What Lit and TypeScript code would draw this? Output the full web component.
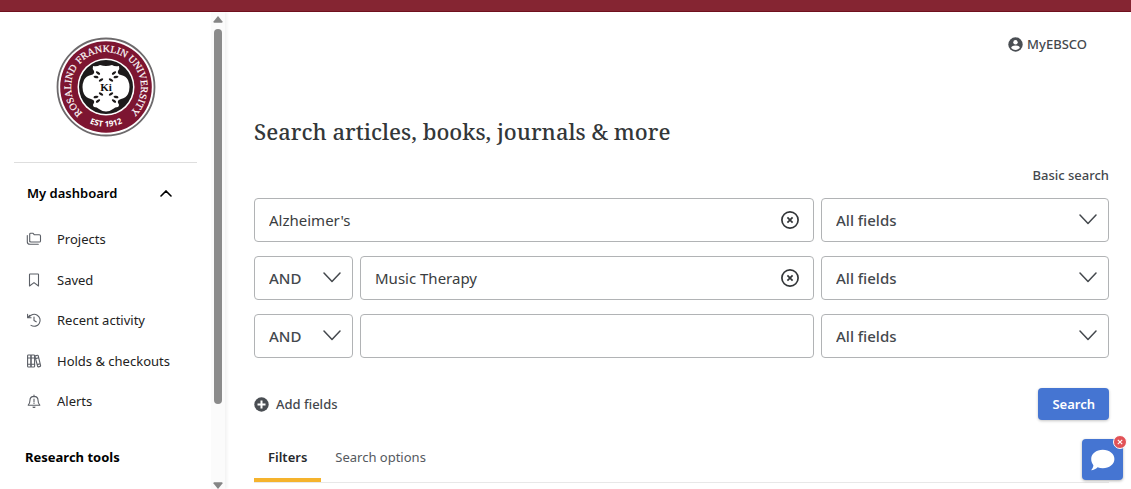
import { LitElement, html, css, svg, nothing } from "lit";
import { customElement, property } from "lit/decorators.js";

const stroke = (body: unknown, size = 16) => html`<svg
  width=${size} height=${size} viewBox="0 0 16 16" fill="none"
  stroke="currentColor" stroke-width="1.1" stroke-linecap="round" stroke-linejoin="round"
  aria-hidden="true">${body}</svg>`;

const icons = {
  projects: svg`<path d="M3.7 10.6V3.2q0-.9.9-.9h2.5l1.3 1.5h4.9q1.2 0 1.2 1.1v5q0 1.1-1.1 1.1H5q-1.3 0-1.3-1.3"/><path d="M1.3 4.6v6.1q0 2.6 2.6 2.6h8.4"/>`,
  saved: svg`<path d="M3.5 2.6q0-.6.6-.6h7.8q.6 0 .6.6V14L8 10.6 3.5 14z"/>`,
  recent: svg`<path d="M3 5.2A6 6 0 1 1 5 13.4"/><path d="M1.6 2.4v3.4h3.5M1.8 5.6l2-2.2M8 5v3.6l2.2 1.2"/>`,
  holds: svg`<rect x="1.6" y="2" width="3.4" height="12" rx=".8"/><rect x="5" y="2" width="3.6" height="12" rx=".8"/><path d="M9.2 2.9l2.3-.7q.5-.1.7.4l2.4 10q.1.6-.4.8l-1.8.5q-.5.1-.7-.4L9 3.6q-.1-.5.2-.7M1.6 5H8.6M1.6 11.2h7M9.6 5.6l3-.8M11.2 11.6l2.9-.8"/>`,
  alerts: svg`<path d="M2.2 12.2h11.6q-1.7-1.6-1.7-4.4Q12.1 3.5 8 3.4 3.9 3.5 3.9 7.8q0 2.8-1.7 4.4zM8 3.4V2M8 6v3M8 10.3v.2M7 14q1 .8 2 0"/>`,
};

const chevron = html`<svg class="chevron" width="18" height="11" viewBox="0 0 18 11" fill="none" stroke="currentColor" stroke-width="1.5" stroke-linecap="round" stroke-linejoin="round" aria-hidden="true"><path d="M1 1l8 8.5L17 1"/></svg>`;

@customElement("university-seal")
class UniversitySeal extends LitElement {
  static styles = css`
    :host { display: block; }
    .seal { display: block; }
    .ring { font-family: "Liberation Serif", serif; font-size: 10px; fill: #fff; stroke: #fff; stroke-width: 0.2px; }
    .est { font-family: "Noto Sans", sans-serif; font-size: 8px; font-weight: 700; fill: #fff; }
    .mono { font-family: "Liberation Serif", serif; font-size: 11px; font-weight: 700; fill: #111; }
  `;
  render() {
    const marks = [[8, -14, -35], [10, -10, -10], [5, -7, 30], [5, 7, -30], [10, 10, 10], [8, 14, 35]];
    return html`<svg class="seal" width="100" height="100" viewBox="-50 -50 100 100" role="img" aria-label="Rosalind Franklin University, est 1912">
      <defs>
        <path id="over" d="M-23.5 26A35 35 0 1 1 23.5 26"/>
        <path id="under" d="M-30 26A39.7 39.7 0 0 0 30 26"/>
      </defs>
      <circle r="48.5" fill="#fff" stroke="#6d6a6c" stroke-width="1.8"/>
      <circle r="45.8" fill="#7d1531"/>
      <circle r="28.5" fill="#fff"/>
      <circle r="27" fill="#1d1a1b"/>
      <path fill="#fff" d="M-13 -21Q-9 -20-6 -22Q0 -20 6 -22Q9 -20 13 -21Q14 -18 12 -16Q11 -13 15 -12Q20 -11 22 -7Q25 0 22 7Q20 11 15 12Q11 13 12 16Q14 18 12 20Q9 20 7 22Q0 27-7 22Q-9 20-12 20Q-14 18-12 16Q-11 13-15 12Q-20 11-22 7Q-25 0-22 -7Q-20 -11-15 -12Q-11 -13-12 -16Q-14 -18-13 -21Z"/>
      <g fill="#1d1a1b">
        ${[-1, 1].map((side) => svg`<g transform="scale(${side} 1)">
          ${marks.map(([x, y, a]) => svg`<ellipse cx=${x} cy=${y} rx="2.5" ry="1.2" transform="rotate(${a} ${x} ${y})"/>`)}
        </g>`)}
      </g>
      <text class="mono" x="0" y="4" text-anchor="middle">Ki</text>
      <text class="ring"><textPath href="#over" startOffset="0">ROSALIND</textPath></text>
      <text class="ring"><textPath href="#over" startOffset="54">FRANKLIN</textPath></text>
      <text class="ring"><textPath href="#over" startOffset="107">UNIVERSITY</textPath></text>
      <text class="est"><textPath href="#under" startOffset="50%" text-anchor="middle">EST 1912</textPath></text>
    </svg>`;
  }
}

@customElement("dashboard-nav")
class DashboardNav extends LitElement {
  static styles = css`
    :host { display: flex; overflow: hidden; background: #fff; box-shadow: 2px 0 3px #f2f2f2; }
    .content { flex: 1; min-width: 0; padding: 25px 14px 0; }
    .logo { display: flex; justify-content: center; padding-bottom: 25px; border-bottom: 1px solid #dedede; }
    .toggle { display: flex; align-items: center; justify-content: space-between; width: 100%;
      margin-top: 19px; padding: 0 25px 0 13px; border: 0; background: none; color: #000;
      font: 600 13px/22px "Noto Sans", sans-serif; }
    .links { display: flex; flex-direction: column; justify-content: space-between; height: 202px;
      list-style: none; margin: 15px 0 0; padding: 0 0 0 12px; }
    .link { display: flex; align-items: center; gap: 15px; height: 40px; color: #222; text-decoration: none;
      font: 400 13px/20px "Noto Sans", sans-serif; }
    .link svg { color: #5b5f66; }
    .tools { margin: 25px 0 0; padding-left: 11px; color: #000; font: 700 13px/22px "Noto Sans", sans-serif; }
    .track { display: flex; flex-direction: column; align-items: center; gap: 6px; width: 14px;
      padding-top: 4px; background: #fbfbfb; }
    .thumb { width: 8px; flex: 1; border-radius: 4px; background: #8b8b8b; margin-bottom: 72px; }
    .arrow { width: 10px; height: 7px; fill: #858585; flex: none; }
  `;
  render() {
    const items: [keyof typeof icons, string][] = [
      ["projects", "Projects"], ["saved", "Saved"], ["recent", "Recent activity"],
      ["holds", "Holds & checkouts"], ["alerts", "Alerts"],
    ];
    return html`
      <nav class="content" aria-label="Dashboard">
        <div class="logo"><university-seal></university-seal></div>
        <button class="toggle" aria-expanded="true">My dashboard
          <svg width="12" height="7" viewBox="0 0 12 7" fill="none" stroke="currentColor" stroke-width="1.6" stroke-linecap="round" aria-hidden="true"><path d="M1 6l5-5 5 5"/></svg>
        </button>
        <ul class="links">
          ${items.map(([icon, label]) => html`<li><a class="link" href="#">${stroke(icons[icon])}<span>${label}</span></a></li>`)}
        </ul>
        <h2 class="tools">Research tools</h2>
      </nav>
      <div class="track" aria-hidden="true">
        <svg class="arrow" viewBox="0 0 10 7"><path d="M5 0l4.5 5.5q.3 1.2-.8 1.2H1.3q-1.1 0-.8-1.2z"/></svg>
        <div class="thumb"></div>
        <svg class="arrow" viewBox="0 0 10 7"><path d="M5 7L.5 1.5Q.2.3 1.3.3h7.4q1.1 0 .8 1.2z"/></svg>
      </div>`;
  }
}

@customElement("search-row")
class SearchRow extends LitElement {
  @property() value = "";
  @property({ type: Boolean }) joined = false;
  @property({ type: Number }) index = 1;

  static styles = css`
    :host { display: grid; grid-template-columns: minmax(0, 35fr) minmax(0, 18fr); gap: 7px; }
    .query { display: flex; gap: 7px; min-width: 0; }
    .box { position: relative; display: flex; align-items: center; height: 44px; box-sizing: border-box;
      border: 1px solid #b1b3b5; border-radius: 4px; background: #fff; color: #44484d; }
    .operator { width: 99px; flex: none; }
    .term { flex: 1; min-width: 0; padding-right: 14px; }
    select, input { appearance: none; flex: 1; min-width: 0; width: 100%; height: 100%; margin: 0; padding: 0 14px;
      border: 0; border-radius: 4px; background: none; color: inherit; outline: none;
      font: 500 15px/22px "Noto Sans", sans-serif; }
    input { font-weight: 400; color: #3a3d40; }
    .chevron { position: absolute; right: 11px; top: 15px; pointer-events: none; }
    .clear { display: flex; padding: 0; border: 0; background: none; color: #333639; }
  `;
  render() {
    return html`
      <div class="query">
        ${this.joined ? html`<div class="box operator">
          <select aria-label="Operator ${this.index}"><option>AND</option><option>OR</option><option>NOT</option></select>${chevron}
        </div>` : nothing}
        <div class="box term">
          <input type="text" aria-label="Search term ${this.index}" .value=${this.value} />
          ${this.value ? html`<button class="clear" aria-label="Clear">
            <svg width="18" height="18" viewBox="0 0 18 18" fill="none" stroke="currentColor" stroke-width="1.7" aria-hidden="true"><circle cx="9" cy="9" r="8.1"/><path d="M6.4 6.4l5.2 5.2M11.6 6.4l-5.2 5.2"/></svg>
          </button>` : nothing}
        </div>
      </div>
      <div class="box">
        <select aria-label="Field ${this.index}"><option>All fields</option><option>Title</option><option>Author</option></select>${chevron}
      </div>`;
  }
}

@customElement("app-root")
class AppRoot extends LitElement {
  static styles = css`
    :host { display: flex; flex-direction: column; height: 100vh; overflow: hidden; background: #fff;
      font-family: "Noto Sans", sans-serif; color: #44484d; }
    .bar { flex: none; height: 12px; box-sizing: border-box; background: #852532; border-bottom: 1px solid #6f101e; }
    .body { flex: 1; min-height: 0; overflow: hidden; display: grid; grid-template-columns: 225px minmax(0, 1fr); }
    main { padding: 21px 22px 0 29px; }
    a { color: inherit; text-decoration: none; }
    .account { display: flex; align-items: center; justify-content: flex-end; gap: 4px; padding-right: 22px;
      font: 500 13px/22px "Noto Sans", sans-serif; }
    h1 { margin: 60px 0 0; color: #333739; font: 500 22px/32px "Noto Serif", "Droid Serif", "Liberation Serif", serif; }
    .basic { display: flex; justify-content: flex-end; margin: 17px 0 12px; font: 500 13px/22px "Noto Sans", sans-serif; }
    .rows { display: grid; gap: 14px; }
    .actions { display: flex; align-items: center; justify-content: space-between; margin-top: 30px; }
    .add { display: flex; align-items: center; gap: 7px; padding: 0; border: 0; background: none; color: inherit;
      font: 500 13px/22px "Noto Sans", sans-serif; }
    .search { height: 32px; padding: 0 14px; border: 0; border-radius: 4px; background: #4575d2; color: #fff;
      box-shadow: 0 1px 3px #c4c4c4; font: 600 13px/22px "Noto Sans", sans-serif; }
    .tabs { display: flex; margin-top: 20px; border-bottom: 1px solid #e8e8e8; }
    .tab { height: 42px; padding: 0 14px 8px; border: 0; background: none; color: #55595e;
      font: 400 13px/22px "Noto Sans", sans-serif; }
    .tab.active { border-bottom: 4px solid #f5b32d; padding-bottom: 4px; color: #26292c; font-weight: 600; }
    .chat { position: fixed; right: 8px; bottom: 9px; width: 41px; height: 41px; }
    .open { display: grid; place-items: center; width: 41px; height: 41px; padding: 0; border: 0; border-radius: 4px;
      background: #4575d2; box-shadow: 0 1px 3px #b4b4b4; }
    .dismiss { position: absolute; right: -4px; top: -4px; display: grid; place-items: center; width: 14px; height: 14px;
      padding: 0; border: 1px solid #fff; border-radius: 50%; background: #e25257; box-sizing: border-box; }
  `;
  render() {
    return html`
      <div class="bar"></div>
      <div class="body">
        <dashboard-nav></dashboard-nav>
        <main>
          <a class="account" href="#">
            <svg width="15" height="15" viewBox="0 0 15 15" aria-hidden="true"><circle cx="7.5" cy="7.5" r="7.2" fill="#4a4e53"/><circle cx="7.5" cy="5.3" r="2.2" fill="#fff"/><path d="M3.2 11q0-2.6 4.3-2.6t4.3 2.6Q10 12.9 7.5 12.9T3.2 11" fill="#fff"/></svg>
            MyEBSCO</a>
          <h1>Search articles, books, journals &amp; more</h1>
          <div class="basic"><a href="#">Basic search</a></div>
          <div class="rows">
            <search-row index="1" value="Alzheimer's"></search-row>
            <search-row index="2" value="Music Therapy" joined></search-row>
            <search-row index="3" joined></search-row>
          </div>
          <div class="actions">
            <button class="add">
              <svg width="15" height="15" viewBox="0 0 15 15" aria-hidden="true"><circle cx="7.5" cy="7.5" r="7.2" fill="#4a4e53"/><path d="M7.5 3.5v8M3.5 7.5h8" stroke="#fff" stroke-width="2"/></svg>
              Add fields</button>
            <button class="search">Search</button>
          </div>
          <div class="tabs" role="tablist">
            <button class="tab active" role="tab" aria-selected="true">Filters</button>
            <button class="tab" role="tab" aria-selected="false">Search options</button>
          </div>
        </main>
      </div>
      <div class="chat">
        <button class="open" aria-label="Open chat">
          <svg width="25" height="22" viewBox="0 0 25 22" fill="#fff" aria-hidden="true"><path d="M12.8.8c6.5 0 11.6 4 11.6 9.2s-5.1 9.2-11.6 9.2c-1.9 0-3.6-.3-5.2-1-1.7 1.7-3.9 2.8-6.6 3 1.3-1.4 2.2-3 2.4-5C2 14.5 1.200 12.400 1.200 10 1.200 4.800 6.300.8 12.800.8z"/></svg>
        </button>
        <button class="dismiss" aria-label="Dismiss chat">
          <svg width="6" height="6" viewBox="0 0 6 6" stroke="#fff" stroke-width="1.1" aria-hidden="true"><path d="M.8.8l4.4 4.4M5.2.8L.8 5.2"/></svg>
        </button>
      </div>`;
  }
}
